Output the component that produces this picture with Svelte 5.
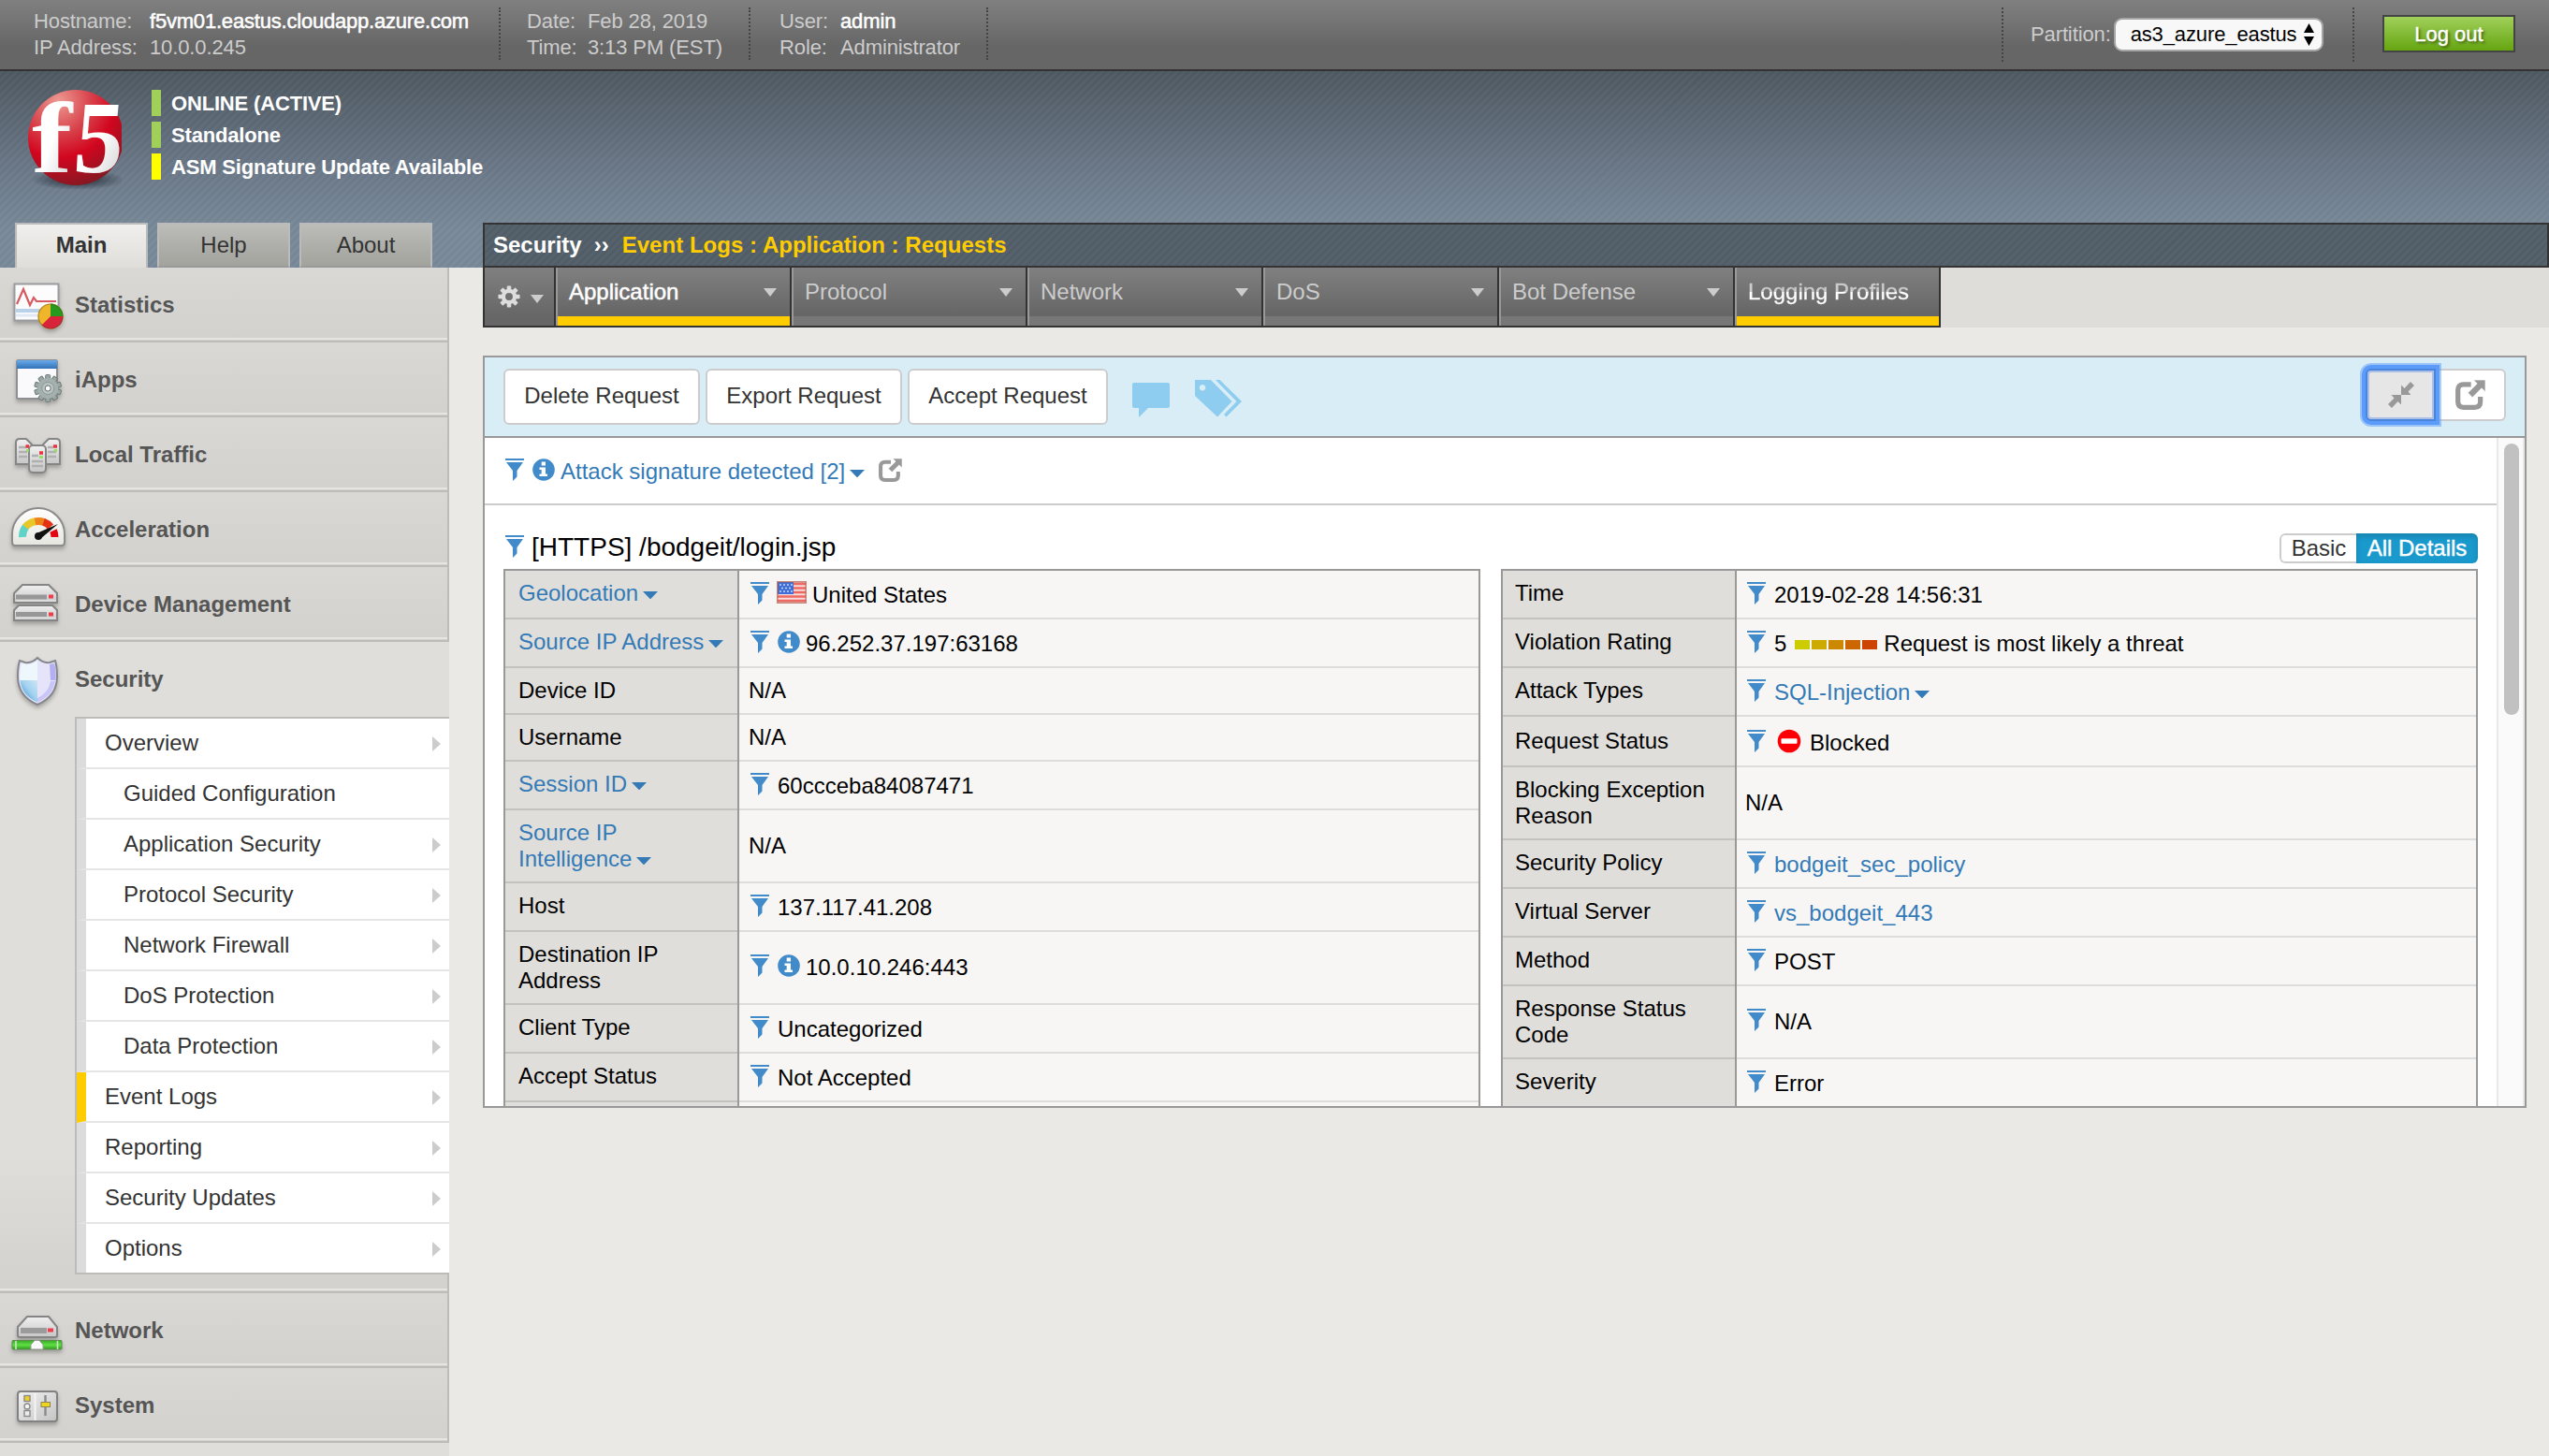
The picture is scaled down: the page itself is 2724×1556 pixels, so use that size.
<script>
  const modules = [
    { name: 'Statistics', icon: 'stats' },
    { name: 'iApps', icon: 'iapps' },
    { name: 'Local Traffic', icon: 'traffic' },
    { name: 'Acceleration', icon: 'accel' },
    { name: 'Device Management', icon: 'device' },
    { name: 'Security', icon: 'security', open: true },
    { name: 'Network', icon: 'network' },
    { name: 'System', icon: 'system' }
  ];

  const submenu = [
    { name: 'Overview', arrow: true },
    { name: 'Guided Configuration', sub: true },
    { name: 'Application Security', sub: true, arrow: true },
    { name: 'Protocol Security', sub: true, arrow: true },
    { name: 'Network Firewall', sub: true, arrow: true },
    { name: 'DoS Protection', sub: true, arrow: true },
    { name: 'Data Protection', sub: true, arrow: true },
    { name: 'Event Logs', arrow: true, current: true },
    { name: 'Reporting', arrow: true },
    { name: 'Security Updates', arrow: true },
    { name: 'Options', arrow: true }
  ];

  const navTabs = [
    { name: 'Application', arrow: true, active: true },
    { name: 'Protocol', arrow: true },
    { name: 'Network', arrow: true },
    { name: 'DoS', arrow: true },
    { name: 'Bot Defense', arrow: true },
    { name: 'Logging Profiles', active: true, fading: true }
  ];

  const left = [
    { label: ['Geolocation'], menu: true, h: 52, funnel: true, flag: true, value: 'United States' },
    { label: ['Source IP Address'], menu: true, h: 52, funnel: true, info: true, value: '96.252.37.197:63168' },
    { label: ['Device ID'], h: 50, value: 'N/A' },
    { label: ['Username'], h: 50, value: 'N/A' },
    { label: ['Session ID'], menu: true, h: 52, funnel: true, value: '60ccceba84087471' },
    { label: ['Source IP', 'Intelligence'], menu: true, h: 78, value: 'N/A' },
    { label: ['Host'], h: 52, funnel: true, value: '137.117.41.208' },
    { label: ['Destination IP', 'Address'], h: 78, funnel: true, info: true, value: '10.0.10.246:443' },
    { label: ['Client Type'], h: 52, funnel: true, value: 'Uncategorized' },
    { label: ['Accept Status'], h: 52, funnel: true, value: 'Not Accepted' },
    { label: [], h: 52, value: '' }
  ];

  const right = [
    { label: ['Time'], h: 52, funnel: true, value: '2019-02-28 14:56:31' },
    { label: ['Violation Rating'], h: 52, funnel: true, rating: 5, value: 'Request is most likely a threat' },
    { label: ['Attack Types'], h: 52, funnel: true, link: true, valueMenu: true, value: 'SQL-Injection' },
    { label: ['Request Status'], h: 54, funnel: true, blocked: true, value: 'Blocked' },
    { label: ['Blocking Exception', 'Reason'], h: 78, value: 'N/A' },
    { label: ['Security Policy'], h: 52, funnel: true, link: true, value: 'bodgeit_sec_policy' },
    { label: ['Virtual Server'], h: 52, funnel: true, link: true, value: 'vs_bodgeit_443' },
    { label: ['Method'], h: 52, funnel: true, value: 'POST' },
    { label: ['Response Status', 'Code'], h: 78, funnel: true, value: 'N/A' },
    { label: ['Severity'], h: 54, funnel: true, value: 'Error' }
  ];

  const gearTeeth = [0, 45, 90, 135, 180, 225, 270, 315];
  const smallTeeth = [0, 36, 72, 108, 144, 180, 216, 252, 288, 324];
</script>

{#snippet funnel()}
  <svg class="funnel" width="20" height="24" viewBox="0 0 20 24">
    <path d="M0 0H20V2H0ZM1 4H19L12.5 13V19.5L8 24V13Z" fill="#428bca" />
  </svg>
{/snippet}

{#snippet info()}
  <svg class="info" width="24" height="24" viewBox="0 0 24 24">
    <circle cx="12" cy="12" r="11.8" fill="#428bca" />
    <path d="M9.7 3.5H14V7.5H9.7ZM7.5 9.5H14V16.5H16V19H7.5V16.5H9.7V12H7.5Z" fill="#fff" />
  </svg>
{/snippet}

{#snippet caret()}
  <svg class="caret" width="16" height="8" viewBox="0 0 16 8"><path d="M0 0H16L8 8.4Z" fill="#337ab7" /></svg>
{/snippet}

{#snippet share(size)}
  <svg class="share" width={size} height={size} viewBox="0 0 24 24">
    <path d="M12.5 3.6H6.5Q2 3.6 2 8V17.5Q2 22 6.5 22H15.5Q20 22 20 17.5V13.5" fill="none" stroke="#999" stroke-width="3.9" />
    <path d="M14.5 0H24V9.5L21 6.6L13.6 14L10 10.4L17.4 3Z" fill="#999" stroke="#fff" stroke-width="0.5" />
  </svg>
{/snippet}

{#snippet down()}
  <svg class="down" width="14" height="9" viewBox="0 0 14 9"><path d="M0 0H14L7 9Z" fill="#ccc" /></svg>
{/snippet}

{#snippet table(rows)}
  <div class="table">
    {#each rows as r}
      <div class="row" style:height="{r.h}px">
        <div class="label" class:link={r.menu} class:low={r.h === 54 && r.blocked}>
          {#each r.label as line, i}
            <div>{line}{#if r.menu && i === r.label.length - 1}{@render caret()}{/if}</div>
          {/each}
        </div>
        <div class="value" class:plain={!r.funnel} class:tall={r.h === 78} class:low={r.blocked}>
          {#if r.funnel}{@render funnel()}{/if}
          {#if r.info}{@render info()}{/if}
          {#if r.flag}
            <svg class="flag" width="32" height="24" viewBox="0 0 32 24">
              <rect width="32" height="24" fill="#f6dcdc" />
              <path d="M1 3H31M1 7.5H31M1 12H31M1 16.5H31M1 21H31" stroke="#ee6a60" stroke-width="2.4" />
              <rect x="1" y="1" width="17" height="13" fill="#3f6fd6" />
              <path d="M3 4H17M5 7.5H17M3 11H17" stroke="#c4d6fa" stroke-width="1.6" stroke-dasharray="2 2" />
              <rect x="0.8" y="0.8" width="30.4" height="22.4" fill="none" stroke="#a8503c" stroke-opacity="0.6" stroke-width="1.6" />
            </svg>
          {/if}
          {#if r.rating}
            <span class="score">{r.rating}</span>
            <span class="bars"><i class="b1"></i><i class="b2"></i><i class="b3"></i><i class="b4"></i><i class="b5"></i></span>
          {/if}
          {#if r.blocked}
            <svg class="blocked" width="26" height="26" viewBox="0 0 26 26">
              <circle cx="13" cy="13" r="12.3" fill="#fb0007" />
              <rect x="4.5" y="10.2" width="17" height="5.6" rx="1" fill="#fff" />
            </svg>
          {/if}
          <span class:link={r.link}>{r.value}{#if r.valueMenu}{@render caret()}{/if}</span>
        </div>
      </div>
    {/each}
  </div>
{/snippet}

{#snippet moduleIcon(kind)}
  <svg class="micon" width="80" height="78" viewBox="0 0 80 78">
    {#if kind === 'stats'}
      <rect x="15.5" y="17.5" width="47" height="39" fill="#fcfcfd" stroke="#999b9e" stroke-width="2" />
      <path d="M17 46H61" stroke="#b9d2ea" stroke-width="4" />
      <path d="M17 51H61" stroke="#dfe8f5" stroke-width="3" />
      <path d="M18 39L25 23L32 40L36 32L39 36H60" fill="none" stroke="#d55a62" stroke-width="2.2" />
      <circle cx="54" cy="52" r="13.5" fill="#efb62c" />
      <path d="M54 52V38.5A13.5 13.5 0 0 1 67.5 52Z" fill="#279a1d" />
      <path d="M54 52H67.5A13.5 13.5 0 0 1 44.5 61.5Z" fill="#d8233b" />
      <circle cx="54" cy="52" r="13" fill="none" stroke="#5b4a1d" stroke-opacity="0.45" stroke-width="1.2" />
    {:else if kind === 'iapps'}
      <rect x="18" y="19" width="43" height="41" rx="1.5" fill="#fafafc" stroke="#8d8f92" stroke-width="2" />
      <rect x="18" y="19" width="43" height="9" fill="url(#blueBar)" />
      <g fill="#9aa8a5" stroke="#6f7b79" stroke-width="1">
        {#each smallTeeth as a}<rect x="48.7" y="34.5" width="5" height="8" rx="1" transform="rotate({a} 51.2 49)" />{/each}
      </g>
      <circle cx="51.2" cy="49" r="11" fill="#a3b0ad" />
      <circle cx="51.2" cy="49" r="6.5" fill="#b9c3c1" stroke="#8b9896" />
      <circle cx="51.2" cy="49" r="3" fill="#fff" stroke="#66706e" />
    {:else if kind === 'traffic'}
      <g stroke="#868686" stroke-width="2" fill="url(#metal)">
        <path d="M17 27Q17 23 21 23H28L34 29V50H17Z" />
        <path d="M64 27Q64 23 60 23H52L46 29V50H64Z" />
        <rect x="31" y="30" width="18" height="29" rx="4" />
      </g>
      <path d="M20 32H28M20 37H29M20 42H29M51 32H57M51 37H60M51 42H60M34 41H41M34 47H46M34 52H46" stroke="#b0b0b0" stroke-width="2.6" />
      <path d="M27.500 31H31M57 31H61M42 38H46" stroke="#f0303c" stroke-width="3.5" />
      <path d="M28 35.5H31M57.500 35.5H61M42 42.5H46" stroke="#8be05a" stroke-width="2.6" />
    {:else if kind === 'accel'}
      <path d="M13 45A28 28 0 0 1 69 45V53Q69 57 66 57H16Q13 57 13 53Z" fill="url(#dial)" stroke="#8c8c8c" stroke-width="2" />
      <g fill="none" stroke-width="8">
        <path d="M24 48A17 17 0 0 1 27.5 37" stroke="#5fd3c6" />
        <path d="M27.2 37.2A17 17 0 0 1 38 31.2" stroke="#e8c828" />
        <path d="M37.5 31.3A17 17 0 0 1 47 32" stroke="#ee8218" />
        <path d="M46.5 31.8A17 17 0 0 1 54 37" stroke="#e53214" />
        <path d="M57 41A17 17 0 0 1 58.5 48" stroke="#e30613" />
      </g>
      <path d="M39 44L62 34L43 50Z" fill="#111" />
      <circle cx="41" cy="47" r="4" fill="#111" />
    {:else if kind === 'device'}
      <g stroke="#858585" stroke-width="2" fill="url(#metal)">
        <path d="M15 28L24 19H52L61 28V38H15Z" />
        <path d="M15 46L20 41H56L61 46V57H15Z" />
      </g>
      <path d="M17 32H50M17 50.5H50" stroke="#979797" stroke-width="5" />
      <path d="M17 36H60M17 54.5H60" stroke="#dcdcdc" stroke-width="2" />
      <path d="M52 31.5H57M52 50.5H57" stroke="#f23b4b" stroke-width="4" />
    {:else if kind === 'security'}
      <path d="M40 17Q46 23 53 22L59 20Q61 27 61 37Q61 58 40 67Q19 58 19 37Q19 27 21 20L27 22Q34 23 40 17Z" fill="#e6e4fb" stroke="#85878d" stroke-width="2" />
      <path d="M40 20Q34 25 27 24L23 23Q21 30 21.5 41H40Z" fill="#eef7fc" />
      <path d="M21.5 41Q23 57 40 64.5V41Z" fill="url(#shieldBlue)" />
      <path d="M53 24L58 23Q60 30 59.5 41H54Z" fill="#b3aff0" />
      <path d="M59 42Q56 58 40 64.5V60Q52 54 54 42Z" fill="#c9c6f7" />
    {:else if kind === 'network'}
      <path d="M19 36L29 25H52L61 36V45Q61 47 59 47H21Q19 47 19 45Z" fill="url(#metal)" stroke="#858585" stroke-width="2" />
      <path d="M22 40H50" stroke="#9b9b9b" stroke-width="6" />
      <path d="M51 39.5H57" stroke="#f23b4b" stroke-width="4" />
      <rect x="13" y="50.5" width="53" height="9.5" rx="1" fill="url(#green)" stroke="#5f8c50" stroke-width="1" />
      <path d="M17 51V60M61.5 51V60" stroke="#c9e8bd" stroke-width="1.6" />
      <path d="M33 60V55L37 50.5H42L46 55V60Z" fill="#fafafa" stroke="#999" stroke-width="1" />
    {:else}
      <rect x="19" y="25" width="42" height="32" rx="3" fill="url(#panelG)" stroke="#828282" stroke-width="2" />
      <path d="M37.5 27V56" stroke="#f5f5f5" stroke-width="2" />
      <g stroke="#8a8a8a" stroke-width="1.4">
        <rect x="26" y="29.5" width="6" height="6" fill="#f2cf1c" />
        <circle cx="29" cy="41" r="3" fill="#f4f4f4" />
        <rect x="26" y="45.5" width="6" height="6" fill="#ececec" />
      </g>
      <path d="M48.5 29V51" stroke="#8b8b8b" stroke-width="2.4" />
      <rect x="44" y="36.5" width="9.5" height="5" fill="#f0d51e" stroke="#8a8455" stroke-width="1" />
    {/if}
  </svg>
{/snippet}

<svg class="defs" width="0" height="0">
  <defs>
    <linearGradient id="blueBar" x1="0" y1="0" x2="0" y2="1"><stop offset="0" stop-color="#68aaea" /><stop offset="1" stop-color="#3272b8" /></linearGradient>
    <linearGradient id="metal" x1="0" y1="0" x2="0" y2="1"><stop offset="0" stop-color="#f0f0f0" /><stop offset="1" stop-color="#c6c6c6" /></linearGradient>
    <linearGradient id="dial" x1="0" y1="0" x2="0" y2="1"><stop offset="0" stop-color="#fff" /><stop offset="1" stop-color="#e6e6e0" /></linearGradient>
    <linearGradient id="shieldBlue" x1="1" y1="0" x2="0" y2="1"><stop offset="0" stop-color="#cde6f6" /><stop offset="0.45" stop-color="#a3d2ef" /><stop offset="1" stop-color="#1f86cf" /></linearGradient>
    <linearGradient id="green" x1="0" y1="0" x2="0" y2="1"><stop offset="0" stop-color="#35a822" /><stop offset="0.5" stop-color="#5fe044" /><stop offset="1" stop-color="#2f9c1d" /></linearGradient>
    <linearGradient id="panelG" x1="0" y1="0" x2="1" y2="1"><stop offset="0" stop-color="#f2f2f2" /><stop offset="1" stop-color="#c4c4c4" /></linearGradient>
  </defs>
</svg>

<div class="page">
  <div class="topbar">
    <div class="pair host">
      <span>Hostname:</span><span class="hi tight">f5vm01.eastus.cloudapp.azure.com</span>
      <span>IP Address:</span><span>10.0.0.245</span>
    </div>
    <div class="pair date">
      <span>Date:</span><span>Feb 28, 2019</span>
      <span>Time:</span><span>3:13 PM (EST)</span>
    </div>
    <div class="pair user">
      <span>User:</span><span class="hi">admin</span>
      <span>Role:</span><span>Administrator</span>
    </div>
    <div class="spacer"></div>
    <div class="partition">
      <span>Partition:</span>
      <div class="select">
        <span>as3_azure_eastus</span>
        <svg width="11" height="24" viewBox="0 0 11 24"><path d="M5.5 0L11 10H0ZM5.5 24L11 14H0Z" fill="#000" /></svg>
      </div>
    </div>
    <button class="logout">Log out</button>
  </div>

  <div class="header">
    <div class="brand">
      <svg class="logo" width="130" height="140" viewBox="0 0 130 140">
        <defs>
          <radialGradient id="ball" cx="0.32" cy="0.12" r="0.95">
            <stop offset="0" stop-color="#ee9a92" /><stop offset="0.35" stop-color="#d8434c" /><stop offset="0.62" stop-color="#d2061f" /><stop offset="1" stop-color="#7c1a22" />
          </radialGradient>
          <radialGradient id="shade"><stop offset="0" stop-color="#1c242c" stop-opacity="0.95" /><stop offset="1" stop-color="#1c242c" stop-opacity="0" /></radialGradient>
          <linearGradient id="glyph" x1="0" y1="0" x2="1" y2="1"><stop offset="0.5" stop-color="#fff" /><stop offset="1" stop-color="#ccc" /></linearGradient>
        </defs>
        <ellipse cx="83" cy="116" rx="50" ry="11" fill="url(#shade)" />
        <circle cx="81" cy="71" r="51" fill="url(#ball)" />
        <g font-family="'Liberation Serif', serif" font-weight="700" font-size="110" fill="url(#glyph)">
          <text transform="translate(34 108) scale(1.18 0.99)">f</text>
          <text transform="translate(77 108) skewX(-5) scale(0.95 1)">5</text>
        </g>
      </svg>
      <div class="status">
        <div class="st green">ONLINE (ACTIVE)</div>
        <div class="st green">Standalone</div>
        <div class="st yellow">ASM Signature Update Available</div>
      </div>
    </div>
    <div class="strip">
      <div class="tabs">
        <div class="tab on">Main</div>
        <div class="tab">Help</div>
        <div class="tab">About</div>
      </div>
      <div class="crumbs"><span>Security</span><span class="sep">››</span><span class="path">Event Logs : Application : Requests</span></div>
    </div>
  </div>

  <div class="body">
    <aside>
      {#each modules as m}
        <div class="module" class:open={m.open}>
          <div class="mhead">{@render moduleIcon(m.icon)}<span>{m.name}</span></div>
          {#if m.open}
            <div class="submenu">
              {#each submenu as s}
                <div class="item" class:sub={s.sub} class:current={s.current}>
                  <span>{s.name}</span>
                  {#if s.arrow}<svg width="9" height="16" viewBox="0 0 9 16"><path d="M0 0L9 8L0 16Z" fill="#ccc" /></svg>{/if}
                </div>
              {/each}
            </div>
          {/if}
        </div>
      {/each}
    </aside>

    <main>
      <nav>
        <div class="gearcell">
          <svg width="24" height="24" viewBox="0 0 26 26">
            <g fill="#ddd">
              {#each gearTeeth as a}<rect x="10.6" y="0.5" width="4.8" height="7" rx="0.8" transform="rotate({a} 13 13)" />{/each}
            </g>
            <circle cx="13" cy="13" r="6.6" fill="none" stroke="#ddd" stroke-width="4.6" />
          </svg>
          {@render down()}
        </div>
        {#each navTabs as t}
          <div class="ntab" class:active={t.active} class:last={t.fading}>
            <span class:fading={t.fading}>{t.name}</span>
            {#if t.arrow}{@render down()}{/if}
          </div>
        {/each}
      </nav>

      <section class="panel">
        <div class="toolbar">
          <button class="btn">Delete Request</button>
          <button class="btn">Export Request</button>
          <button class="btn wide">Accept Request</button>
          <svg class="comment" width="40" height="38" viewBox="0 0 40 38"><path d="M2 0H38Q40 0 40 2V25Q40 27 38 27H17L7 37V27H2Q0 27 0 25V2Q0 0 2 0Z" fill="#8ecdef" /></svg>
          <svg class="tags" width="50" height="40" viewBox="0 0 50 40">
            <path d="M0 0H17L39.5 23L24 39.5L0 17ZM8 5A3.3 3.3 0 1 0 8.1 5Z" fill="#8ecdef" fill-rule="evenodd" />
            <path d="M22 0H26.500L50 23L33.500 39.5L31 37L44.500 23Z" fill="#8ecdef" />
          </svg>
          <div class="spacer"></div>
          <div class="group">
            <button class="gbtn focused">
              <svg width="28" height="28" viewBox="0 0 28 28"><path d="M14 14V3.500L17.500 7L24 0L28 4L21.500 10.500L24.500 14ZM14 14V24.500L10.500 21L4 28L0 24L6.500 17.500L3.500 14Z" fill="#999" /></svg>
            </button>
            <button class="gbtn">{@render share(32)}</button>
          </div>
        </div>

        <div class="scroller">
          <div class="content">
            <div class="violation">
              {@render funnel()}{@render info()}<span class="link">Attack signature detected [2]{@render caret()}</span>{@render share(25)}
            </div>
            <div class="title">
              {@render funnel()}<span class="uri">[HTTPS] /bodgeit/login.jsp</span>
              <div class="spacer"></div>
              <div class="switch"><span>Basic</span><span class="sel">All Details</span></div>
            </div>
            <div class="tables">
              {@render table(left)}
              <div class="second">{@render table(right)}</div>
            </div>
          </div>
          <div class="track"><div class="thumb"></div></div>
        </div>
      </section>
    </main>
  </div>
</div>

<style>
  :global(body) { background: #eae9e5; overflow: hidden; }
  * { box-sizing: border-box; }
  .defs { display: block; }
  .page {
    width: 2724px; height: 1556px; overflow: hidden;
    display: flex; flex-direction: column;
    font: 24px/28px "Liberation Sans", Arial, Helvetica, sans-serif;
    color: #000; background: #eae9e5;
  }
  button { font: inherit; padding: 0; margin: 0; cursor: default; }
  svg { display: block; flex: none; }
  .spacer { flex: 1; }

  .topbar {
    height: 76px; flex: none; display: flex; align-items: flex-start; padding-top: 8px;
    font-size: 22px; color: #ccc;
    background: linear-gradient(#808080, #666 50px); border-bottom: 2px solid #333;
  }
  .pair {
    height: 56px; display: grid; grid-template-rows: 28px 28px; white-space: nowrap;
    border-right: 2px dotted #444; letter-spacing: -0.12px; line-height: 30px;
  }
  .host { width: 535px; padding-left: 36px; grid-template-columns: 124px 1fr; }
  .date { width: 267px; padding-left: 28px; grid-template-columns: 65px 1fr; }
  .user { width: 254px; padding-left: 31px; grid-template-columns: 65px 1fr; }
  .hi { color: #fff; -webkit-text-stroke: 0.5px #fff; }
  .hi.tight { letter-spacing: -0.2px; }
  .partition {
    height: 58px; width: 377px; display: flex; align-items: center;
    padding-left: 29px; border-left: 2px dotted #444; border-right: 2px dotted #444;
    padding-bottom: 1px; letter-spacing: -0.12px;
  }
  .select {
    width: 224px; height: 36px; margin-left: 3px; padding: 0 8px 0 16px;
    display: flex; align-items: center; justify-content: space-between;
    border: 2px solid #a6a6a6; border-radius: 9px; background: #f8f8f8; color: #000;
  }
  .logout {
    width: 142px; height: 40px; margin: 8px 36px 0 30px; line-height: 37px;
    border: 2px solid #444; background: linear-gradient(#a0d05a, #66a511);
    color: #fff; text-shadow: 2px 2px 3px rgba(0, 0, 0, 0.5); -webkit-text-stroke: 0.4px #fff;
  }

  .header {
    height: 210px; flex: none; display: flex; flex-direction: column;
    background:
      repeating-linear-gradient(135deg, rgba(255, 255, 255, 0.022) 0 2.83px, rgba(0, 0, 0, 0.02) 2.83px 5.66px),
      linear-gradient(#4e5961, #6b7888 50%, #788999 80%);
  }
  .brand { height: 162px; display: flex; }
  .status { margin: 20px 0 0 32px; display: flex; flex-direction: column; gap: 6px; }
  .st { height: 28px; border-left: 10px solid; padding-left: 11px; font-weight: 700; font-size: 22px; line-height: 30px; letter-spacing: -0.17px; }
  .st { color: #fff; white-space: nowrap; }
  .green { border-left-color: #a0d05a; }
  .yellow { border-left-color: #ff0; }
  .strip { height: 48px; display: flex; }
  .tabs { width: 516px; padding-left: 16px; display: flex; gap: 10px; }
  .tab {
    width: 142px; height: 48px; border: 2px solid #bbb; border-bottom-color: #999;
    background: linear-gradient(#bcbcb8, #a2a39d); color: #333; text-align: center; line-height: 44px;
  }
  .tab.on { border-bottom: 0; background: linear-gradient(#f0efed, #dfdeda); font-weight: 700; }
  .crumbs {
    flex: 1; height: 48px; border: 2px solid #333; padding-left: 9px; line-height: 44px;
    background:
      repeating-linear-gradient(135deg, rgba(255, 255, 255, 0.022) 0 2.83px, rgba(0, 0, 0, 0.02) 2.83px 5.66px),
      #525e68;
    color: #fff; font-weight: 700; display: flex; white-space: nowrap;
  }
  .sep { margin: 0 14px 0 13px; }
  .path { color: #fc0; letter-spacing: 0.03px; }

  .body { flex: 1; display: flex; min-height: 0; }
  aside { width: 480px; flex: none; background: #dfdeda; }
  .module {
    border-right: 2px solid #bcbcba; height: 80px; display: flex; flex-direction: column;
    background:
      linear-gradient(#bcbcba, #bcbcba) bottom / 100% 2px no-repeat,
      linear-gradient(#e6e5e2, #e6e5e2) 0 calc(100% - 3px) / 100% 2px no-repeat,
      linear-gradient(#d9d8d4, #d2d1cd);
  }
  .module.open {
    height: 696px;
    border-right: 0;
    background:
      linear-gradient(#bcbcba, #bcbcba) 478px 100% / 2px 20px no-repeat,
      linear-gradient(#bcbcba, #bcbcba) bottom / 100% 2px no-repeat,
      linear-gradient(#e6e5e2, #e6e5e2) 0 calc(100% - 3px) / 478px 2px no-repeat,
      linear-gradient(#dfdeda, #d2d1cd) bottom / 100% 150px no-repeat;
  }
  .mhead { height: 80px; flex: none; display: flex; font-weight: 700; color: #555; }
  .mhead span { margin-top: 26px; }
  .micon { filter: drop-shadow(0 3px 2px rgba(0, 0, 0, 0.25)); }
  .submenu { margin-left: 80px; border: 2px solid #bcbcba; border-right: 0; background: #fff; }
  .item {
    height: 54px; line-height: 52px; padding: 0 9px 0 20px; color: #333;
    border-left: 10px solid #dcdcdc; border-bottom: 2px solid #e5e5e5;
    display: flex; justify-content: space-between;
  }
  .item:last-child { height: 52px; border-bottom: 0; }
  .item svg { margin-top: 19px; }
  .item.sub { padding-left: 40px; }
  .item.current { border-left-color: #fc0; }

  main { flex: 1; min-width: 0; }
  nav { height: 64px; padding-left: 36px; display: flex; background: linear-gradient(90deg, #eae9e5 36px, #dfddd9 36px); }
  .gearcell {
    width: 78px; display: flex; align-items: center; gap: 11px; padding-left: 14px;
    border: solid #333; border-width: 0 2px 2px; background: linear-gradient(#808080, #666 85%);
  }
  .gearcell .down { margin-top: 4px; }
  .ntab {
    width: 252px; height: 64px; padding: 12px 14px 0 14px; display: flex; justify-content: space-between;
    border: solid #333; border-width: 0 2px 2px 0; color: #ccc; white-space: nowrap;
    background:
      linear-gradient(#999, #999) 0 0 / 2px 100% no-repeat,
      linear-gradient(#777, #777) bottom / 100% 10px no-repeat,
      linear-gradient(#808080, #666 50px);
  }
  .ntab.active {
    color: #fff;
    background:
      linear-gradient(#999, #999) 0 0 / 2px 100% no-repeat,
      linear-gradient(#fc0, #fc0) bottom / 100% 10px no-repeat,
      linear-gradient(#808080, #666 50px);
  }
  .ntab.last { width: 220px; }
  .ntab .down { margin-top: 10px; }
  .ntab.active > span:not(.fading) { -webkit-text-stroke: 0.5px #fff; }
  .fading {
    background: linear-gradient(#ccc 14px, #fff 14px); -webkit-background-clip: text; background-clip: text;
    color: transparent; -webkit-text-stroke: 0.4px transparent;
  }

  .panel {
    width: 2184px; height: 804px; margin: 30px 0 0 36px; border: 2px solid #999; background: #fff;
    display: flex; flex-direction: column; overflow: hidden;
  }
  .toolbar {
    height: 86px; flex: none; display: flex; align-items: flex-start; padding: 12px 20px 0;
    background: #d9edf7; border-bottom: 2px solid #999;
  }
  .btn {
    width: 210px; height: 60px; margin-right: 6px; border: 2px solid #ccc; border-radius: 6px;
    background: #fff; color: #333; line-height: 54px; padding-bottom: 2px;
  }
  .btn.wide { width: 214px; }
  .comment { margin: 15px 0 0 20px; }
  .tags { margin: 12px 0 0 27px; }
  .group { display: flex; }
  .gbtn {
    width: 75px; height: 56px; display: flex; align-items: center; justify-content: center;
    border: 2px solid #ccc; border-left: 0; border-radius: 0 6px 6px 0; background: #fff;
  }
  .gbtn.focused {
    border: 2px solid #4a84dd; border-radius: 6px 0 0 6px; background: #e6e6e6; position: relative;
    box-shadow: 0 0 0 4px #5b9bf9, 0 0 0 6px rgba(91, 155, 249, 0.5), inset 0 0 0 2px #a9bfe6;
  }

  .scroller { flex: 1; display: flex; min-height: 0; }
  .content { width: 2150px; height: 714px; overflow: hidden; }
  .violation {
    height: 72px; display: flex; align-items: flex-start; padding: 22px 0 0 22px; border-bottom: 2px solid #ccc;
  }
  .violation .info { margin: 0 6px 0 9px; }
  .violation .share { margin-left: 15px; }
  .violation .link { display: block; }
  .caret { display: inline-block; margin-left: 5px; vertical-align: 2px; }
  .link { color: #337ab7; }
  .title { height: 68px; padding: 30px 20px 0 22px; display: flex; align-items: flex-start; font-size: 28px; }
  .title .funnel { margin: 2px 8px 0 0; }
  .uri { line-height: 30px; }
  .switch {
    height: 32px; display: flex; font-size: 24px; line-height: 28px; color: #333;
    border-radius: 6px; overflow: hidden;
  }
  .switch span { width: 82px; height: 32px; text-align: center; border: 2px solid #ccc; border-right: 0; border-radius: 6px 0 0 6px; }
  .switch .sel {
    width: 130px; border: 0; border-radius: 0; line-height: 32px; color: #fff; background: #1a99cc;
    box-shadow: inset 0 3px 6px rgba(0, 0, 0, 0.15); -webkit-text-stroke: 0.4px #fff;
  }
  .tables { display: flex; gap: 22px; padding-left: 20px; }
  .table { width: 1044px; border: 2px solid #999; border-bottom: 0; }
  .row { display: flex; }
  .label {
    width: 250px; padding: 10px 0 0 14px; background: #dfdeda; border-right: 2px solid #999;
    box-shadow: inset 0 -2px 0 #c2c2be; white-space: nowrap;
  }
  .label.low { padding-top: 12px; }
  .value {
    flex: 1; display: flex; align-items: flex-start; padding: 12px 0 0 12px;
    background: #f7f6f4; border-bottom: 2px solid #ddd; white-space: nowrap;
  }
  .value .funnel { margin-right: 9px; }
  .value.plain { padding: 10px 0 0 10px; }
  .value.tall { padding-top: 24px; }
  .value.low { padding-top: 14px; }
  .second .label { padding-left: 13px; }
  .second .value { padding-left: 11px; }
  .second .value.plain { padding-left: 9px; }
  .value .info { margin-right: 6px; }
  .value .flag { margin: -1px 6px 0 -1px; }
  .bars { display: flex; gap: 2px; margin: 10px 7px 0 9px; }
  .bars i { width: 16px; height: 10px; }
  .b1 { background: #cc0; }
  .b2 { background: #ca0; }
  .b3 { background: #c80; }
  .b4 { background: #c60; }
  .b5 { background: #c40; }
  .blocked { margin: -1px 9px 0 3px; }

  .track { width: 30px; background: #fafafa; border: solid #e8e8e8; border-width: 0 2px; padding: 6px 0 0 6px; }
  .thumb { width: 16px; height: 290px; border-radius: 8px; background: #c1c1c1; }
</style>
